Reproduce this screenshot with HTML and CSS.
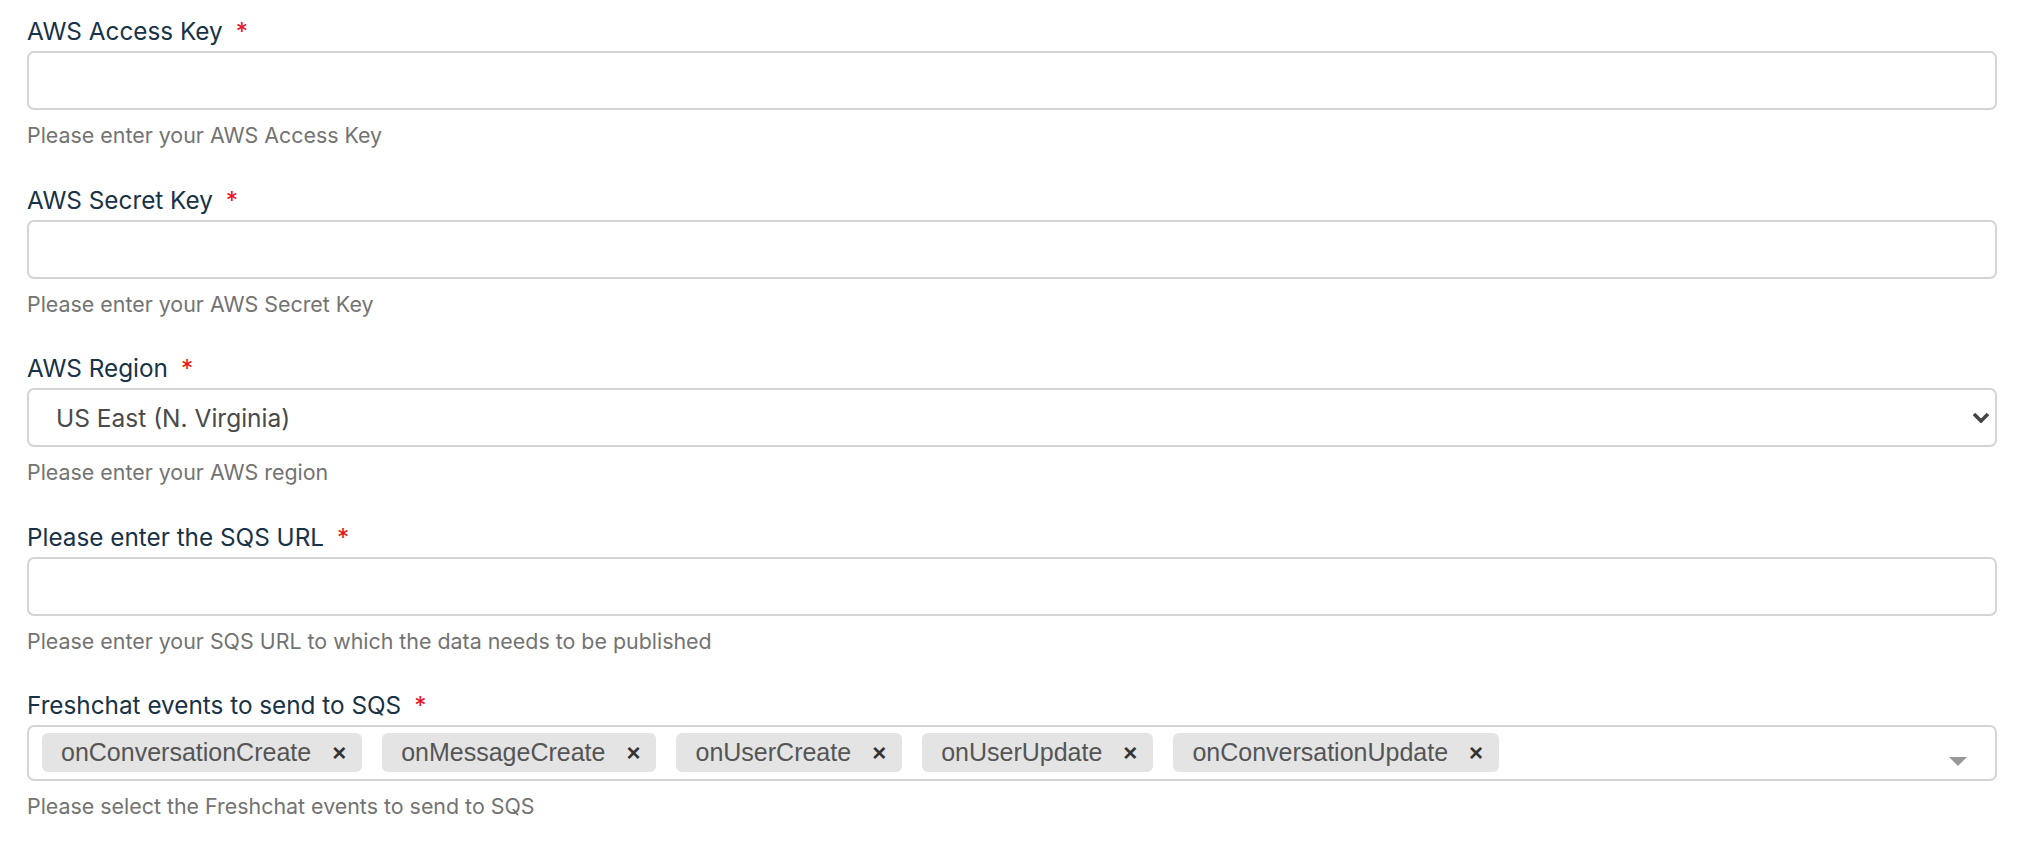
FILE: index.html
```html
<!DOCTYPE html>
<html lang="en">
<head>
    <meta charset="UTF-8">
    <meta name="viewport" content="width=device-width, initial-scale=1.0">
    <title>SQS Integration Settings</title>
    <link rel="stylesheet" href="styles.css">
</head>
<body>
    <form class="settings-form">
        <div class="field">
            <label class="field-label" for="accessKey">AWS Access Key<span class="required">*</span></label>
            <input class="field-input" id="accessKey" type="text">
            <p class="field-hint">Please enter your AWS Access Key</p>
        </div>

        <div class="field">
            <label class="field-label" for="secretKey">AWS Secret Key<span class="required">*</span></label>
            <input class="field-input" id="secretKey" type="text">
            <p class="field-hint">Please enter your AWS Secret Key</p>
        </div>

        <div class="field">
            <label class="field-label" for="region">AWS Region<span class="required">*</span></label>
            <div class="select-wrap">
                <select class="field-input field-select" id="region">
                    <option>US East (N. Virginia)</option>
                    <option>US East (Ohio)</option>
                    <option>US West (Oregon)</option>
                    <option>EU (Ireland)</option>
                </select>
                <svg class="select-chevron" width="18" height="11" viewBox="0 0 18 11">
                    <path d="M2 2 L9 9 L16 2" fill="none" stroke="#444" stroke-width="3.6"/>
                </svg>
            </div>
            <p class="field-hint">Please enter your AWS region</p>
        </div>

        <div class="field">
            <label class="field-label" for="sqsUrl">Please enter the SQS URL<span class="required">*</span></label>
            <input class="field-input" id="sqsUrl" type="text">
            <p class="field-hint">Please enter your SQS URL to which the data needs to be published</p>
        </div>

        <div class="field">
            <label class="field-label">Freshchat events to send to SQS<span class="required">*</span></label>
            <div class="multi-select">
                <ul class="tag-list">
                    <li class="tag">onConversationCreate<span class="tag-remove">×</span></li>
                    <li class="tag">onMessageCreate<span class="tag-remove">×</span></li>
                    <li class="tag">onUserCreate<span class="tag-remove">×</span></li>
                    <li class="tag">onUserUpdate<span class="tag-remove">×</span></li>
                    <li class="tag">onConversationUpdate<span class="tag-remove">×</span></li>
                </ul>
                <svg class="multi-arrow" width="18" height="9" viewBox="0 0 18 9">
                    <path d="M0 0 H18 L9 9 Z" fill="#999"/>
                </svg>
            </div>
            <p class="field-hint">Please select the Freshchat events to send to SQS</p>
        </div>
    </form>
</body>
</html>
```

FILE: styles.css
```css
body {
    font-family: Inter, "Liberation Sans", Arial, sans-serif;
    margin: 0;
    padding: 16px 22px 0 27px;
    background-color: #fff;
    color: #183247;
}
.field {
    margin-bottom: 35.5px;
}
.field-label {
    display: block;
    font-size: 24.3px;
    line-height: 30px;
    margin-bottom: 5px;
    color: #183247;
}
.required {
    color: #e8141b;
    margin-left: 13px;
}
.field-input {
    display: block;
    box-sizing: border-box;
    width: 100%;
    height: 59px;
    margin: 0;
    padding: 0 27px;
    border: 2px solid #d4d4d4;
    border-radius: 7px;
    background-color: #fff;
    font-family: inherit;
    font-size: 24.5px;
    color: #4a4a4a;
    outline: none;
}
.field-hint {
    margin: 11px 0 0;
    font-size: 21.4px;
    line-height: 28px;
    color: #737373;
}
.select-wrap {
    position: relative;
}
.field-select {
    appearance: none;
    -webkit-appearance: none;
    padding-right: 60px;
}
.select-chevron {
    position: absolute;
    right: 7px;
    top: 24px;
    pointer-events: none;
}
.multi-select {
    display: flex;
    align-items: flex-start;
    box-sizing: border-box;
    height: 56px;
    padding: 6px 28px 0 13px;
    border: 2px solid #d4d4d4;
    border-radius: 7px;
}
.tag-list {
    display: flex;
    gap: 20px;
    flex: 1;
    margin: 0;
    padding: 0;
    list-style: none;
}
.tag {
    display: flex;
    align-items: center;
    height: 39px;
    padding: 0 16px 0 19px;
    border-radius: 6px;
    background-color: #e4e4e4;
    font-family: "Liberation Sans", Arial, sans-serif;
    font-size: 25px;
    color: #555;
}
.tag-remove {
    margin-left: 21px;
    font-size: 24px;
    font-weight: bold;
    color: #333;
}
.multi-arrow {
    margin-top: 24px;
}
```
